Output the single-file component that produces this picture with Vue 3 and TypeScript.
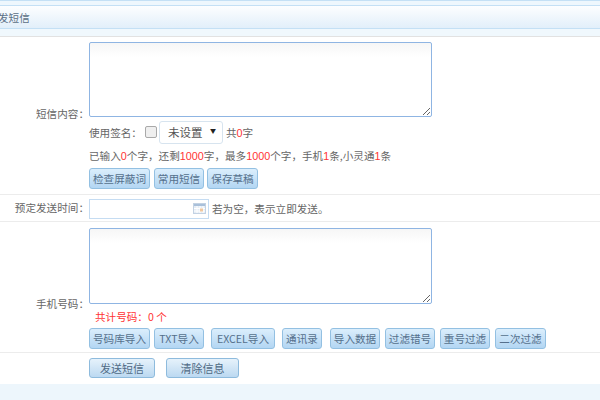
<script setup lang="ts">
const importButtons = [
  { text: '号码库导入', width: 61, gap: 4 },
  { text: 'TXT导入', width: 50, gap: 7 },
  { text: 'EXCEL导入', width: 64, gap: 7 },
  { text: '通讯录', width: 40, gap: 8 },
  { text: '导入数据', width: 50, gap: 5 },
  { text: '过滤错号', width: 50, gap: 5 },
  { text: '重号过滤', width: 50, gap: 5 },
  { text: '二次过滤', width: 51, gap: 0 },
]
const smsButtons = [
  { text: '检查屏蔽词', width: 61, gap: 4 },
  { text: '常用短信', width: 50, gap: 3 },
  { text: '保存草稿', width: 51, gap: 0 },
]
</script>

<template>
  <div class="page">
    <div class="topband"></div>
    <div class="titlebar"><span class="title">发短信</span></div>
    <div class="subband"></div>

    <section class="row row-content">
      <div class="field">
        <label class="label label-content">短信内容：</label>
        <textarea class="area area-content"></textarea>
      </div>
      <div class="sub sign">
        <span class="sign-label">使用签名：</span>
        <span class="check"></span>
        <span class="select">未设置<i class="arrow">▼</i></span>
        <span class="sign-count">共<em>0</em>字</span>
      </div>
      <div class="sub info">
        已输入<em>0</em>个字，还剩<em>1000</em>字，最多<em>1000</em>个字，手机<em>1</em>条,小灵通<em>1</em>条
      </div>
      <div class="sub btns btns-sms">
        <button
          v-for="b in smsButtons"
          :key="b.text"
          class="btn"
          :style="{ width: b.width + 'px', marginRight: b.gap + 'px' }"
        >{{ b.text }}</button>
      </div>
    </section>

    <section class="row row-time">
      <label class="label">预定发送时间：</label>
      <div class="dateinput">
        <svg class="cal" width="13" height="11" viewBox="0 0 13 11">
          <rect x="0.5" y="0.5" width="12" height="10" fill="#e4ecf5" stroke="#c3d2e3" />
          <rect x="1" y="1" width="11" height="2" fill="#a9c0da" />
          <path d="M1 5.5H12M1 8H12M4 3V10M7 3V10M10 3V10" stroke="#fff" stroke-width="1" />
          <rect x="7" y="5.5" width="3" height="3" fill="#f0c8a0" />
        </svg>
      </div>
      <span class="hint">若为空，表示立即发送。</span>
    </section>

    <section class="row row-phone">
      <div class="field">
        <label class="label label-phone">手机号码：</label>
        <textarea class="area area-phone"></textarea>
      </div>
      <div class="sub total">共计号码：0 个</div>
      <div class="sub btns btns-import">
        <button
          v-for="b in importButtons"
          :key="b.text"
          class="btn"
          :style="{ width: b.width + 'px', marginRight: b.gap + 'px' }"
        >{{ b.text }}</button>
      </div>
    </section>

    <section class="row row-actions">
      <button class="btn btn-action btn-send">发送短信</button>
      <button class="btn btn-action btn-clear">清除信息</button>
    </section>

    <div class="footer"></div>
  </div>
</template>

<style>
html, body { margin: 0; padding: 0; background: #fff; overflow: hidden; }
</style>

<style scoped>
.page {
  width: 600px;
  height: 400px;
  overflow: hidden;
  display: flex;
  flex-direction: column;
  font: 10.6px "Noto Sans CJK SC", "Liberation Sans", sans-serif;
  color: #666;
  background: #fff;
}
em { font-style: normal; color: #f33; font-family: "Liberation Sans", sans-serif; font-size: 10.8px; }
.topband {
  height: 4px;
  background: #eef7fd;
  border-top: 1px solid #c4e0f5;
}
.titlebar {
  height: 22px;
  border-top: 1px solid #c4e0f5;
  border-bottom: 1px solid #c4e0f5;
  background: linear-gradient(#fdfeff, #e2effa);
  display: flex;
  align-items: center;
  color: #5b6f85;
}
.title { margin-left: -2px; font-size: 10.6px; }
.subband {
  height: 7px;
  background: #f0f8fd;
  border-bottom: 1px solid #e2e2e2;
}
.row { border-bottom: 1px solid #ececec; box-sizing: border-box; }
.row-content { height: 158px; padding-top: 5px; }
.row-time { height: 27px; display: flex; align-items: center; }
.row-phone { height: 131px; padding-top: 6px; }
.row-actions {
  height: 31px;
  padding: 5px 0 0 89px;
  display: flex;
  align-items: flex-start;
  border-bottom: 0;
}
.field { display: flex; align-items: flex-end; }
.label {
  box-sizing: border-box;
  width: 89px;
  text-align: right;
  line-height: 14px;
  white-space: nowrap;
  flex: none;
}
.label-content { margin-bottom: -4px; }
.label-phone { margin-bottom: -7px; }
.area {
  display: block;
  width: 343px;
  box-sizing: border-box;
  border: 1px solid #8fb5e3;
  border-radius: 2px;
  background: linear-gradient(#f6f6f6, #fff 14px);
  outline: none;
  margin: 0;
  padding: 0;
}
.area-content { height: 75px; }
.area-phone { height: 76px; }
.sub { padding-left: 89px; }
.sign {
  display: flex;
  align-items: center;
  height: 23px;
  margin-top: 4px;
}
.sign-label { width: 56px; flex: none; }
.check {
  width: 10px;
  height: 10px;
  flex: none;
  border: 1px solid #a9a9a9;
  border-radius: 2px;
  background: #efefef;
  margin-right: 2px;
  margin-top: -2px;
}
.select {
  width: 64px;
  height: 23px;
  flex: none;
  box-sizing: border-box;
  border: 1px solid #d7e4ef;
  border-radius: 3px;
  padding-left: 8px;
  line-height: 21px;
  position: relative;
  font-size: 11.5px;
  color: #555;
}
.arrow {
  position: absolute;
  right: 6px;
  top: 3px;
  font-style: normal;
  font-size: 6px;
  line-height: 12px;
  color: #222;
}
.sign-count { margin-left: 3px; }
.info { height: 14px; line-height: 14px; margin-top: 5px; white-space: nowrap; }
.btns { display: flex; }
.btns-sms { margin-top: 5px; }
.btn {
  box-sizing: border-box;
  height: 21px;
  padding: 0;
  margin: 0;
  flex: none;
  font: inherit;
  color: #55708c;
  border: 1px solid #93c0e2;
  border-radius: 3px;
  background: linear-gradient(#dbeefc, #b3d6f3);
  white-space: nowrap;
  text-align: center;
}
.dateinput {
  width: 120px;
  height: 20px;
  flex: none;
  box-sizing: border-box;
  border: 1px solid #c5dcf2;
  display: flex;
  align-items: center;
  justify-content: flex-end;
  padding-right: 2px;
  margin-top: 1px;
}
.cal { display: block; }
.hint { margin-left: 3px; white-space: nowrap; }
.total {
  padding-left: 95px;
  color: #f33;
  height: 14px;
  line-height: 14px;
  margin-top: 6px;
}
.btns-import { margin-top: 4px; }
.btn-action {
  height: 20px;
  font-size: 11px;
  background: linear-gradient(#e6f2fb, #bcd9f1);
  color: #4f6a85;
  border-color: #8ebbdd;
}
.btn-send { width: 66px; margin-right: 11px; }
.btn-clear { width: 73px; }
.footer { flex: 1; background: #edf6fc; }
</style>
